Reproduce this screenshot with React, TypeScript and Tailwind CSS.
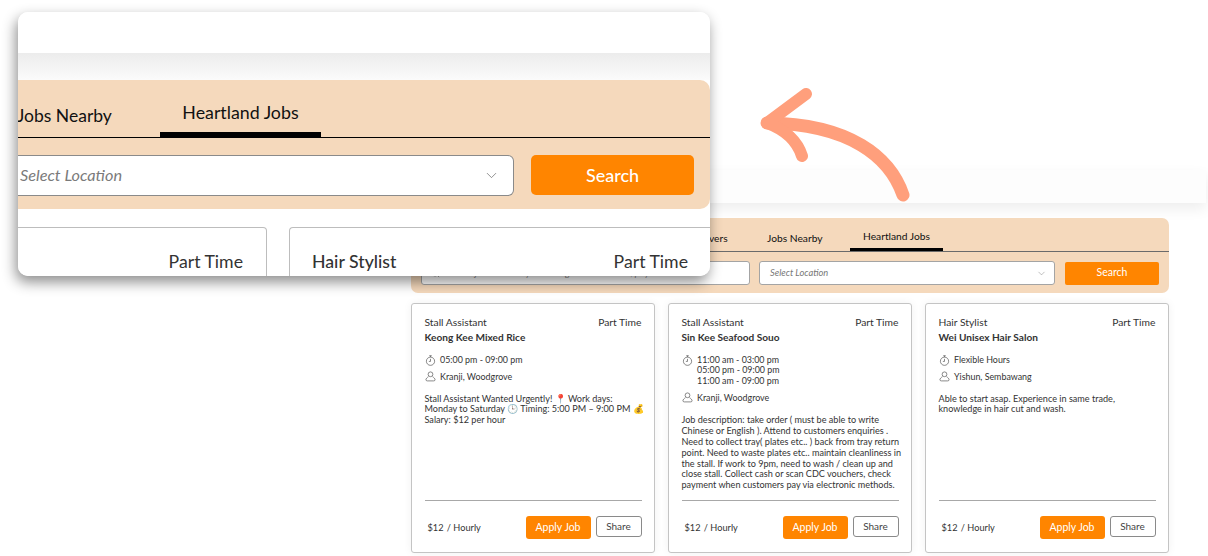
import React from 'react';
import { ChevronDown, Search } from 'lucide-react';

const font = "font-['Lato','Noto_Sans',sans-serif]";

interface Job {
  role: string;
  company: string;
  hours: string[];
  location: string;
  description: React.ReactNode;
}

const jobs: Job[] = [
  {
    role: 'Stall Assistant',
    company: 'Keong Kee Mixed Rice',
    hours: ['05:00 pm - 09:00 pm'],
    location: 'Kranji, Woodgrove',
    description: 'Stall Assistant Wanted Urgently! 📍 Work days: Monday to Saturday 🕒 Timing: 5:00 PM – 9:00 PM 💰 Salary: $12 per hour',
  },
  {
    role: 'Stall Assistant',
    company: 'Sin Kee Seafood Souo',
    hours: ['11:00 am - 03:00 pm', '05:00 pm - 09:00 pm', '11:00 am - 09:00 pm'],
    location: 'Kranji, Woodgrove',
    description:
      'Job description: take order ( must be able to write Chinese or English ). Attend to customers enquiries . Need to collect tray( plates etc.. ) back from tray return point. Need to waste plates etc.. maintain cleanliness in the stall. If work to 9pm, need to wash / clean up and close stall. Collect cash or scan CDC vouchers, check payment when customers pay via electronic methods.',
  },
  {
    role: 'Hair Stylist',
    company: 'Wei Unisex Hair Salon',
    hours: ['Flexible Hours'],
    location: 'Yishun, Sembawang',
    description: 'Able to start asap. Experience in same trade, knowledge in hair cut and wash.',
  },
];

const TimerIcon = () => (
  <svg width="11" height="11" viewBox="0 0 12 12" fill="none" stroke="#4a4a4a" strokeWidth="0.7" className="shrink-0">
    <circle cx="6" cy="6.8" r="4.5" />
    <path d="M4.6 0.8h2.8M6 0.8v1.5M6 4.2v2.8h-1.8" />
  </svg>
);

const PersonIcon = () => (
  <svg width="11" height="11" viewBox="0 0 12 12" fill="none" stroke="#4a4a4a" strokeWidth="0.7" className="shrink-0">
    <circle cx="6" cy="3.6" r="2.6" />
    <path d="M3.8 6.2C2.4 7 1 8.4 1 9.6c0 .9.8 1.2 1.6 1.2h6.8c.8 0 1.6-.3 1.6-1.2 0-1.2-1.4-2.6-2.8-3.4" />
  </svg>
);

const JobCard = ({ job }: { job: Job }) => (
  <div className="flex h-[250px] w-[244px] flex-col rounded-[3px] border border-[#c4c4c4] bg-white pl-[12.5px] pr-[12.5px] pt-[11px] shadow-[0_0_8px_rgba(0,0,0,0.06)]">
    <div className="flex items-start justify-between text-[10.3px] leading-[15px] text-[#333333]">
      <span>{job.role}</span>
      <span>Part Time</span>
    </div>
    <div className="text-[10.1px] font-bold leading-[15px] text-[#333333]">{job.company}</div>

    <div className="mt-[9.5px] flex gap-[4.5px] text-[8.9px] leading-[10.8px] text-[#333333]">
      <TimerIcon />
      <div>
        {job.hours.map((h) => (
          <div key={h}>{h}</div>
        ))}
      </div>
    </div>
    <div className="mt-[5.5px] flex items-center gap-[4.5px] text-[8.9px] leading-[11px] text-[#333333]">
      <PersonIcon />
      <span>{job.location}</span>
    </div>

    <p className="mr-[-4px] mt-[11.5px] text-[9.1px] leading-[10.9px] text-[#333333]">{job.description}</p>

    <div className="mt-auto flex items-start justify-between border-t border-[#a8a8a8] pb-[13px] pt-[15px]">
      <div className="ml-[3px] mt-[6px] text-[9.2px] leading-[11px] text-[#333333]">
        $12 <span className="ml-[1px]">/ Hourly</span>
      </div>
      <div className="flex items-start gap-[5px]">
        <button className="flex h-[23px] w-[65px] items-center justify-center rounded-[3px] bg-[#ff8500] text-[10.5px] text-white">
          Apply Job
        </button>
        <button className="flex h-[21px] w-[46px] items-center justify-center rounded-[3px] border border-[#8a8a8a] bg-white text-[10px] text-[#444444]">
          Share
        </button>
      </div>
    </div>
  </div>
);

export default function App() {
  return (
    <div className={`${font} relative h-[556px] w-[1208px] overflow-hidden bg-white`}>
      {/* page behind */}
      <div className="ml-[400px] h-[203px] w-[806px] pt-[170px]">
        <div className="h-[33px] bg-[#fdfdfd] shadow-[0_6px_14px_rgba(0,0,0,0.07)]" />
      </div>
      <div className="ml-[411px] mt-[15px] w-[758px]">
        <div className="h-[75px] rounded-[7px] bg-[#f5d9bc]">
          <div className="flex h-[34px] items-end border-b border-[#6b6b6b] text-[10.25px] text-[#111111]">
            <span className="mb-[5px] ml-[284px] w-[72px]">Drivers</span>
            <span className="mb-[5px] w-[83px]">Jobs Nearby</span>
            <div className="flex h-[34px] w-[93px] items-end justify-center border-b-[3px] border-black pb-[4px]">
              Heartland Jobs
            </div>
          </div>
          <div className="flex items-center pl-[10px] pt-[9px]">
            <div className="flex h-[24px] w-[329px] items-center gap-[6px] rounded-[3px] border border-[#a4a4a4] bg-white pl-[9px] text-[9.5px] italic text-[#8a8a8a]">
              <Search size={9} />
              <span>Search job title or keywords. e.g. F&amp;B executive, payroll</span>
            </div>
            <div className="ml-[9px] flex h-[24px] w-[296px] items-center justify-between rounded-[3px] border border-[#a4a4a4] bg-white pl-[10px] pr-[7px] text-[9.3px] italic text-[#777777]">
              <span>Select Location</span>
              <ChevronDown size={11} strokeWidth={1} color="#777777" />
            </div>
            <button className="ml-[10px] flex h-[23px] w-[94px] items-center justify-center rounded-[2px] bg-[#ff8500] text-[10.5px] text-white">
              Search
            </button>
          </div>
        </div>
        <div className="mt-[10px] flex gap-[13px]">
          {jobs.map((job) => (
            <JobCard key={job.company} job={job} />
          ))}
        </div>
      </div>

      {/* zoomed callout */}
      <div className="absolute left-[18px] top-[12px] h-[264px] w-[692px] overflow-hidden rounded-[10px] bg-white shadow-[-2px_6px_14px_rgba(0,0,0,0.45)]">
        <div className="h-[41px] bg-white" />
        <div className="h-[27px] bg-gradient-to-b from-[#ececec] to-[#fbfbfb]" />
        <div className="h-[129px] rounded-r-[10px] bg-[#f5d9bc]">
          <div className="flex h-[58px] items-end border-b border-black text-[17.8px] text-[#111111]">
            <span className="mb-[8px] ml-[-1px] w-[143px] text-[17.5px]">Jobs Nearby</span>
            <div className="flex h-[58px] w-[161px] items-end justify-center border-b-[5px] border-black pb-[6px]">
              Heartland Jobs
            </div>
          </div>
          <div className="flex pt-[17px]">
            <div className="flex h-[41px] w-[496px] items-center justify-between rounded-r-[6px] border border-l-0 border-[#8a8a8a] bg-white pl-[2px] pr-[13px] text-[16.3px] italic text-[#7a7a7a]">
              <span>Select Location</span>
              <ChevronDown size={17} strokeWidth={1} color="#666666" />
            </div>
            <button className="ml-[17px] flex h-[40px] w-[163px] items-center justify-center rounded-[5px] bg-[#ff8500] text-[18px] font-medium text-white">
              Search
            </button>
          </div>
        </div>
        <div className="flex pt-[18px] text-[17.7px] text-[#333333]">
          <div className="flex h-[60px] w-[249px] items-start justify-end rounded-tr-[4px] border border-l-0 border-[#bdbdbd] bg-white pr-[23px] pt-[22px] leading-[24px]">
            Part Time
          </div>
          <div className="ml-[22px] flex h-[60px] w-[421px] items-start justify-between rounded-tl-[4px] border border-r-0 border-[#bdbdbd] bg-white pl-[22px] pr-[22px] pt-[22px] leading-[24px]">
            <span className="font-medium">Hair Stylist</span>
            <span>Part Time</span>
          </div>
        </div>
      </div>

      {/* arrow */}
      <svg className="absolute left-[755px] top-[82px]" width="165" height="125" viewBox="0 0 165 125" fill="none" stroke="#ff9f7c" strokeLinecap="round" strokeLinejoin="round">
        <path d="M148 113C135 75 95 42 12 41" strokeWidth="13" />
        <path d="M51 12L12 41C28 47 42 58 47 74" strokeWidth="12" />
      </svg>
    </div>
  );
}
